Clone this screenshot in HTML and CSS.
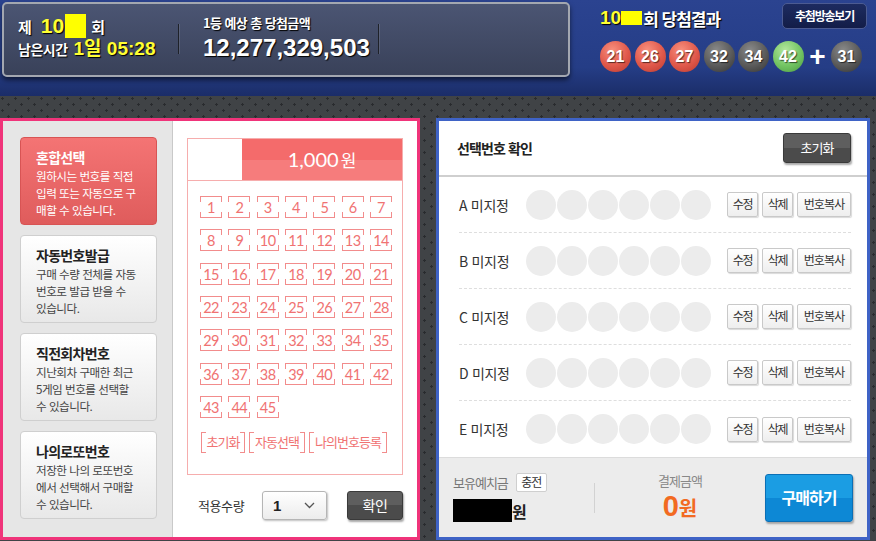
FILE: index.html
```html
<!DOCTYPE html>
<html lang="ko">
<head>
<meta charset="utf-8">
<title>로또 구매</title>
<link rel="stylesheet" href="styles.css">
</head>
<body>
<div class="top">
  <div class="info">
    <div class="round-col">
      <div class="round"><span class="r-lbl">제</span><span class="r-num">10</span><span class="mask"></span><span class="r-lbl">회</span></div>
      <div class="remain">남은시간<span class="r-time">1일 05:28</span></div>
    </div>
    <div class="vsep"></div>
    <div class="prize-col">
      <div class="prize-lbl">1등 예상 총 당첨금액</div>
      <div class="prize-amt">12,277,329,503</div>
    </div>
    <div class="vsep"></div>
  </div>
  <div class="result">
    <div class="result-head">
      <div class="result-title"><span class="r-num2">10</span><span class="mask2"></span>회 당첨결과</div>
      <a href="#" class="btn-broad">추첨방송보기</a>
    </div>
    <div class="balls">
      <span class="ball red">21</span>
      <span class="ball red">26</span>
      <span class="ball red">27</span>
      <span class="ball gray">32</span>
      <span class="ball gray">34</span>
      <span class="ball green">42</span>
      <span class="plus">+</span>
      <span class="ball gray">31</span>
    </div>
  </div>
</div>

<div class="main">
  <div class="pick">
    <div class="menu">
      <div class="card on">
        <div class="card-tit">혼합선택</div>
        <div class="card-txt">원하시는 번호를 직접<br>입력 또는 자동으로 구<br>매할 수 있습니다.</div>
      </div>
      <div class="card">
        <div class="card-tit">자동번호발급</div>
        <div class="card-txt">구매 수량 전체를 자동<br>번호로 발급 받을 수<br>있습니다.</div>
      </div>
      <div class="card">
        <div class="card-tit">직전회차번호</div>
        <div class="card-txt">지난회차 구매한 최근<br>5게임 번호를 선택할<br>수 있습니다.</div>
      </div>
      <div class="card">
        <div class="card-tit">나의로또번호</div>
        <div class="card-txt">저장한 나의 로또번호<br>에서 선택해서 구매할<br>수 있습니다.</div>
      </div>
    </div>
    <div class="picker">
      <div class="pick-box">
        <div class="pick-head"><span class="blank"></span><span class="price">1,000<small>원</small></span></div>
        <div class="nums">
          <span>1</span><span>2</span><span>3</span><span>4</span><span>5</span><span>6</span><span>7</span>
          <span>8</span><span>9</span><span>10</span><span>11</span><span>12</span><span>13</span><span>14</span>
          <span>15</span><span>16</span><span>17</span><span>18</span><span>19</span><span>20</span><span>21</span>
          <span>22</span><span>23</span><span>24</span><span>25</span><span>26</span><span>27</span><span>28</span>
          <span>29</span><span>30</span><span>31</span><span>32</span><span>33</span><span>34</span><span>35</span>
          <span>36</span><span>37</span><span>38</span><span>39</span><span>40</span><span>41</span><span>42</span>
          <span>43</span><span>44</span><span>45</span>
        </div>
        <div class="pick-btns">
          <a href="#" class="w44">초기화</a>
          <a href="#" class="w56">자동선택</a>
          <a href="#" class="w78">나의번호등록</a>
        </div>
      </div>
      <div class="apply">
        <span class="apply-lbl">적용수량</span>
        <div class="select"><b>1</b><svg width="11" height="7" viewBox="0 0 11 7"><polyline points="1,1 5.5,5.5 10,1" fill="none" stroke="#555" stroke-width="1.3"/></svg></div>
        <a href="#" class="btn-dark btn-ok">확인</a>
      </div>
    </div>
  </div>

  <div class="confirm">
    <div class="conf-head">
      <h2>선택번호 확인</h2>
      <a href="#" class="btn-dark btn-reset">초기화</a>
    </div>
    <div class="rows">
      <div class="row">
        <span class="row-lbl">A 미지정</span>
        <span class="dot"></span><span class="dot"></span><span class="dot"></span><span class="dot"></span><span class="dot"></span><span class="dot"></span>
        <div class="row-btns"><a href="#" class="w31">수정</a><a href="#" class="w31">삭제</a><a href="#" class="w54">번호복사</a></div>
      </div>
      <div class="row">
        <span class="row-lbl">B 미지정</span>
        <span class="dot"></span><span class="dot"></span><span class="dot"></span><span class="dot"></span><span class="dot"></span><span class="dot"></span>
        <div class="row-btns"><a href="#" class="w31">수정</a><a href="#" class="w31">삭제</a><a href="#" class="w54">번호복사</a></div>
      </div>
      <div class="row">
        <span class="row-lbl">C 미지정</span>
        <span class="dot"></span><span class="dot"></span><span class="dot"></span><span class="dot"></span><span class="dot"></span><span class="dot"></span>
        <div class="row-btns"><a href="#" class="w31">수정</a><a href="#" class="w31">삭제</a><a href="#" class="w54">번호복사</a></div>
      </div>
      <div class="row">
        <span class="row-lbl">D 미지정</span>
        <span class="dot"></span><span class="dot"></span><span class="dot"></span><span class="dot"></span><span class="dot"></span><span class="dot"></span>
        <div class="row-btns"><a href="#" class="w31">수정</a><a href="#" class="w31">삭제</a><a href="#" class="w54">번호복사</a></div>
      </div>
      <div class="row">
        <span class="row-lbl">E 미지정</span>
        <span class="dot"></span><span class="dot"></span><span class="dot"></span><span class="dot"></span><span class="dot"></span><span class="dot"></span>
        <div class="row-btns"><a href="#" class="w31">수정</a><a href="#" class="w31">삭제</a><a href="#" class="w54">번호복사</a></div>
      </div>
    </div>
    <div class="pay">
      <div class="bal">
        <div class="bal-top"><span>보유예치금</span><a href="#" class="btn-charge">충전</a></div>
        <div class="bal-amt"><span class="hide"></span><b>원</b></div>
      </div>
      <div class="pay-sep"></div>
      <div class="total">
        <div class="total-lbl">결제금액</div>
        <div class="total-amt"><b>0</b>원</div>
      </div>
      <a href="#" class="btn-buy">구매하기</a>
    </div>
  </div>
</div>
</body>
</html>
```

FILE: styles.css
```css
*{box-sizing:border-box;margin:0;padding:0;}
a{text-decoration:none;}
body{width:876px;height:541px;overflow:hidden;font-family:"Noto Sans CJK KR",sans-serif;color:#333;
  background:#404346 url("data:image/svg+xml,%3Csvg xmlns='http://www.w3.org/2000/svg' width='13' height='12'%3E%3Cpath d='M1 2h3v1H1zM2 1h1v3H2zM7 8h3v1H7zM8 7h1v3H8z' fill='%23292b2e'/%3E%3C/svg%3E") repeat;}

/* top */
.top{height:96px;display:flex;padding:2px 0 0 2px;background:linear-gradient(#2b4390,#253d86 70%,#1b2d68);}
.info{width:568px;height:75px;border:2px solid #a3a7b0;border-radius:5px;background:linear-gradient(#4b5573,#394159);box-shadow:0 3px 5px rgba(0,0,0,.55);display:flex;align-items:flex-start;padding-top:10px;color:#fff;text-shadow:1px 1px 1px #000;}
.round-col{width:174px;padding-left:14px;}
.round{display:flex;align-items:center;height:24px;}
.r-lbl{font-size:15px;font-weight:bold;}
.r-num{font-family:"Liberation Sans",sans-serif;font-size:21px;font-weight:bold;color:#ffff33;margin-left:9px;}
.mask{width:21px;height:24px;background:#ffff00;margin:0 5px 0 1px;}
.remain{height:22px;line-height:22px;font-size:14px;font-weight:bold;letter-spacing:-.5px;}
.r-time{font-family:"Liberation Sans","Noto Sans CJK KR",sans-serif;font-size:19px;color:#ffff33;margin-left:6px;letter-spacing:0;}
.vsep{width:1px;height:30px;margin-top:10px;background:#1e2129;box-shadow:1px 0 0 rgba(255,255,255,.12);}
.prize-col{width:199px;padding-left:24px;}
.prize-lbl{height:18px;line-height:18px;font-size:13px;font-weight:bold;letter-spacing:-.6px;}
.prize-amt{height:32px;line-height:32px;font-family:"Liberation Sans",sans-serif;font-size:24px;font-weight:bold;}

.result{margin-left:30px;width:267px;}
.result-head{display:flex;justify-content:space-between;align-items:center;height:26px;margin-top:1px;}
.result-title{display:flex;align-items:center;padding-top:4px;font-size:17px;font-weight:bold;color:#fff;letter-spacing:-1px;text-shadow:1px 1px 1px #000;}
.r-num2{font-family:"Liberation Sans",sans-serif;font-size:19px;color:#ffff33;letter-spacing:0;}
.mask2{width:21px;height:14px;background:#ffff00;margin-right:1px;}
.btn-broad{width:85px;height:26px;line-height:24px;text-align:center;border:1px solid #4c5b92;border-radius:5px;background:linear-gradient(#1d2b60,#131d48);color:#fff;font-size:12px;font-weight:bold;letter-spacing:-1.2px;}
.balls{display:flex;align-items:center;margin-top:12px;}
.ball{width:31px;height:31px;border-radius:50%;margin-right:3.5px;text-align:center;line-height:31px;font-family:"Liberation Sans",sans-serif;font-size:16px;font-weight:bold;color:#fff;text-shadow:1px 1px 1px rgba(0,0,0,.6);}
.ball.red{background:radial-gradient(circle at 40% 30%,#f8907e,#e0584a 55%,#b93a30);}
.ball.gray{background:radial-gradient(circle at 40% 30%,#8a8a8a,#5a5a5a 55%,#333);}
.ball.green{background:radial-gradient(circle at 40% 30%,#b4e89e,#72c462 55%,#4a9a40);}
.plus{width:21px;margin-right:3px;text-align:center;font-family:"Liberation Sans",sans-serif;font-size:28px;font-weight:bold;color:#fff;line-height:31px;}

/* main */
.main{display:flex;gap:16px;padding:22px 6px 0 0;}
.pick{width:420px;height:422px;border:3px solid #f0347a;display:flex;background:#fff;}
.menu{width:170px;background:#e6e6e6;border-right:1px solid #c9c9c9;padding:16px 0 0 17px;}
.card{width:137px;height:88px;margin-bottom:10px;border:1px solid #cfcfcf;border-radius:4px;background:linear-gradient(#fff,#e8e8e8);padding:9px 0 0 15px;}
.card-tit{height:20px;line-height:20px;font-size:14px;font-weight:bold;color:#222;letter-spacing:-.7px;}
.card-txt{margin-top:1px;font-size:11.6px;line-height:16.8px;color:#444;letter-spacing:-.5px;}
.card.on{border-color:#d85454;background:linear-gradient(#f47474,#df5c5c);}
.card.on .card-tit,.card.on .card-txt{color:#fff;}

.picker{flex:1;padding:17px 14px 0 14px;}
.pick-box{height:337px;border:1px solid #f6adad;}
.pick-head{display:flex;height:42px;border-bottom:1px solid #f6adad;}
.blank{width:54px;}
.price{flex:1;text-align:center;line-height:41px;color:#fff;font-family:Lato,sans-serif;font-size:20px;background:linear-gradient(#f46b6b 50%,#f67c7c 50%);}
.price small{font-family:"Noto Sans CJK KR",sans-serif;font-size:17px;margin-left:2px;}
.nums{display:grid;grid-template-columns:repeat(7,22px);column-gap:6.33px;row-gap:11.33px;padding:15px 0 0 12px;}
.nums span{height:22px;line-height:21px;text-align:center;font-family:Lato,sans-serif;font-size:14.5px;letter-spacing:-.6px;color:#f07272;border-top:1px solid #f28c8c;border-bottom:1px solid #f28c8c;
  background:linear-gradient(#f28c8c,#f28c8c) left top/1px 5px no-repeat,linear-gradient(#f28c8c,#f28c8c) right top/1px 5px no-repeat,linear-gradient(#f28c8c,#f28c8c) left bottom/1px 5px no-repeat,linear-gradient(#f28c8c,#f28c8c) right bottom/1px 5px no-repeat;}
.pick-btns{display:flex;gap:4px;padding-left:13px;margin-top:14px;}
.pick-btns a{height:21px;line-height:19px;text-align:center;font-size:13px;letter-spacing:-1px;color:#f07272;border-left:1px solid #f28c8c;border-right:1px solid #f28c8c;
  background:linear-gradient(#f28c8c,#f28c8c) left top/4px 1px no-repeat,linear-gradient(#f28c8c,#f28c8c) right top/4px 1px no-repeat,linear-gradient(#f28c8c,#f28c8c) left bottom/4px 1px no-repeat,linear-gradient(#f28c8c,#f28c8c) right bottom/4px 1px no-repeat;}
.w44{width:44px;}
.w56{width:56px;}
.w78{width:78px;}
.apply{display:flex;align-items:center;margin-top:16px;}
.apply-lbl{width:75px;padding-left:11px;font-size:13px;color:#333;letter-spacing:-.4px;}
.select{width:65px;height:29px;display:flex;align-items:center;justify-content:space-between;padding:0 11px 0 10px;border:1px solid #b5b5b5;border-radius:3px;background:linear-gradient(#fff,#ececec);box-shadow:1px 1px 2px rgba(0,0,0,.25);}
.select b{font-family:"Liberation Sans",sans-serif;font-size:15px;color:#222;}
.btn-dark{display:block;text-align:center;color:#fff;border:1px solid #3a3a3a;border-radius:3px;background:linear-gradient(#5e5e5e 50%,#4b4b4b 50%);box-shadow:1px 2px 2px rgba(0,0,0,.35);}
.btn-ok{width:56px;height:29px;line-height:26px;margin-left:20px;font-size:14px;letter-spacing:-.5px;}

.confirm{width:434px;height:422px;border:3px solid #3f63c6;background:#fff;display:flex;flex-direction:column;}
.conf-head{height:56px;display:flex;align-items:center;justify-content:space-between;padding:0 16px 0 18px;border-bottom:2px solid #cfcfcf;}
.conf-head h2{font-size:14px;font-weight:bold;color:#222;letter-spacing:-.9px;}
.btn-reset{width:68px;height:30px;line-height:27px;font-size:13px;letter-spacing:-1px;}
.rows{padding:0 16px 0 20px;}
.row{height:56px;display:flex;align-items:center;border-bottom:1px dashed #dedede;}
.row:last-child{border-bottom:0;}
.row-lbl{width:67px;font-size:14px;color:#333;letter-spacing:-.3px;}
.dot{width:30px;height:30px;border-radius:50%;background:#ececec;margin-right:1px;}
.row-btns{display:flex;gap:4px;margin-left:auto;}
.row-btns a{height:25px;line-height:22px;text-align:center;font-size:12px;color:#333;letter-spacing:-1.3px;border:1px solid #c9c9c9;border-radius:2px;background:linear-gradient(#fff,#eee);box-shadow:1px 1px 1px rgba(0,0,0,.15);}
.w31{width:31px;}
.w54{width:54px;letter-spacing:-.9px !important;}

.pay{flex:1;display:flex;align-items:center;padding:0 14px;background:#ececec;border-top:1px solid #dcdcdc;}
.bal{width:141px;}
.bal-top{display:flex;align-items:center;gap:8px;font-size:13px;color:#777;letter-spacing:-1px;}
.btn-charge{width:31px;height:19px;line-height:16px;text-align:center;font-size:12px;color:#333;letter-spacing:-1px;background:#fff;border:1px solid #cfcfcf;border-radius:2px;}
.bal-amt{display:flex;align-items:center;margin-top:7px;}
.hide{width:59px;height:23px;background:#000;}
.bal-amt b{font-size:16px;color:#222;}
.pay-sep{width:1px;height:30px;background:#d2d2d2;}
.total{flex:1;text-align:center;}
.total-lbl{font-size:13px;color:#888;letter-spacing:-1px;line-height:18px;}
.total-amt{color:#f26a21;font-size:20px;font-weight:bold;line-height:32px;}
.total-amt b{font-family:"Liberation Sans",sans-serif;font-size:29px;}
.btn-buy{width:88px;height:48px;line-height:45px;text-align:center;color:#fff;font-size:16px;font-weight:bold;letter-spacing:-1px;border:1px solid #0b6fb5;border-radius:3px;background:linear-gradient(#1b9de3 50%,#0d88d5 50%);box-shadow:1px 2px 2px rgba(0,0,0,.3);}
```
